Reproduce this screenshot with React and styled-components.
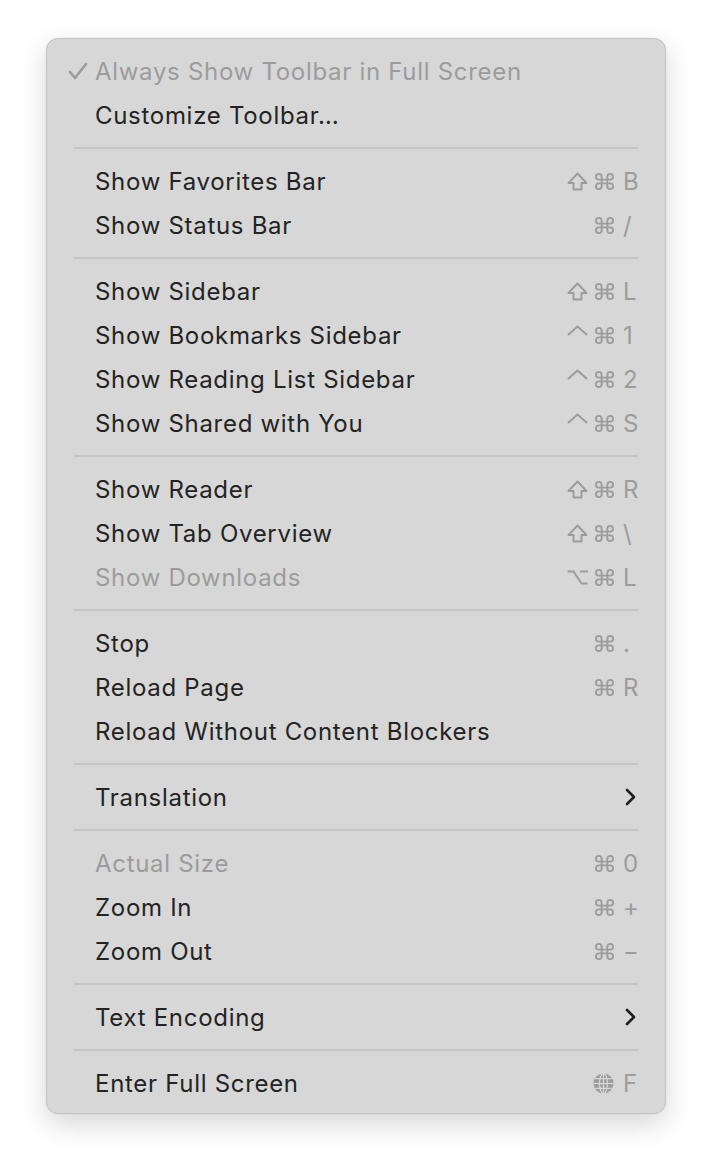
import React from "react";
import styled, { createGlobalStyle } from "styled-components";

const GlobalStyle = createGlobalStyle`
  html, body {
    margin: 0;
    background: #ffffff;
  }
  body {
    font-family: Inter, "Liberation Sans", sans-serif;
    -webkit-font-smoothing: antialiased;
  }
`;

const Page = styled.div`
  padding: 38px 46px;
  width: 712px;
  box-sizing: border-box;
`;

const Panel = styled.div`
  width: 620px;
  box-sizing: border-box;
  background: #d7d7d7;
  border: 1px solid #c3c3c3;
  border-radius: 12px;
  padding: 10px 0 8px;
  box-shadow: 0 10px 28px rgba(0, 0, 0, 0.16), 0 0 2px rgba(0, 0, 0, 0.08);
`;

const Row = styled.div`
  height: 44px;
  display: flex;
  align-items: center;
  position: relative;
  padding: 0 26px 0 48px;
  color: ${(p) => (p.$disabled ? "#9c9c9c" : "#232323")};
  font-size: 24px;
`;

const Check = styled.svg`
  position: absolute;
  left: 20px;
  top: 12px;
  fill: none;
  stroke: #9c9c9c;
  stroke-width: 2.6;
  stroke-linecap: round;
  stroke-linejoin: round;
`;

const Label = styled.span`
  flex: 1;
  letter-spacing: 0.7px;
`;

const Shortcut = styled.div`
  display: flex;
  align-items: center;
  gap: 9px;
  color: #9c9c9c;
`;

const Mods = styled.div`
  display: flex;
  align-items: center;
  gap: 7px;
`;

const Key = styled.span`
  width: 16px;
`;

const Separator = styled.div`
  height: 22px;
  display: flex;
  align-items: center;
  padding: 0 27px;

  &::after {
    content: "";
    flex: 1;
    height: 2px;
    background: #c4c4c4;
  }
`;

const Icon = styled.svg`
  display: block;
  fill: none;
  stroke: currentColor;
  stroke-width: 2;
  stroke-linecap: round;
  stroke-linejoin: round;
`;

const Shift = () => (
  <Icon width="21" height="19" viewBox="0 0 21 19" style={{ strokeWidth: 1.9 }}>
    <path d="M6.5 17.5v-6.5H1.5L10.5 1.5 19.5 11h-5v6.5z" />
  </Icon>
);

const Cmd = () => (
  <Icon width="19" height="19" viewBox="2 2 20 20" style={{ strokeWidth: 2 }}>
    <path d="M15 7v10a3 3 0 1 0 3-3H6a3 3 0 1 0 3 3V7a3 3 0 1 0-3 3h12a3 3 0 1 0-3-3" />
  </Icon>
);

const Ctrl = () => (
  <Icon width="21" height="11" viewBox="0 0 21 11" style={{ marginTop: "-10px" }}>
    <path d="M1.5 9.5L10.5 1.5 19.5 9.5" />
  </Icon>
);

const Opt = () => (
  <Icon width="21" height="15" viewBox="0 0 21 15" style={{ strokeLinecap: "butt", strokeLinejoin: "miter" }}>
    <path d="M0.5 1.5h6l8 12h6" />
    <path d="M13 1.5h8" />
  </Icon>
);

const Globe = () => (
  <svg width="21" height="21" viewBox="0 0 24 24">
    <circle cx="12" cy="12" r="11.5" fill="#9c9c9c" />
    <g fill="none" stroke="#d7d7d7" strokeWidth="1.4">
      <ellipse cx="12" cy="12" rx="4.5" ry="11.5" />
      <line x1="12" y1="0.5" x2="12" y2="23.5" />
      <line x1="0.5" y1="12" x2="23.5" y2="12" />
      <path d="M2.5 6.5h19M2.5 17.5h19" />
    </g>
  </svg>
);

const Chevron = () => (
  <Icon width="16" height="22" viewBox="0 0 16 22" style={{ color: "#1f1f1f", strokeWidth: 2.6 }}>
    <path d="M4 4l7 7-7 7" />
  </Icon>
);

const MOD = { shift: Shift, cmd: Cmd, ctrl: Ctrl, opt: Opt, globe: Globe };

const sections = [
  [
    { label: "Always Show Toolbar in Full Screen", disabled: true, checked: true },
    { label: "Customize Toolbar…" },
  ],
  [
    { label: "Show Favorites Bar", mods: ["shift", "cmd"], key: "B" },
    { label: "Show Status Bar", mods: ["cmd"], key: "/" },
  ],
  [
    { label: "Show Sidebar", mods: ["shift", "cmd"], key: "L" },
    { label: "Show Bookmarks Sidebar", mods: ["ctrl", "cmd"], key: "1" },
    { label: "Show Reading List Sidebar", mods: ["ctrl", "cmd"], key: "2" },
    { label: "Show Shared with You", mods: ["ctrl", "cmd"], key: "S" },
  ],
  [
    { label: "Show Reader", mods: ["shift", "cmd"], key: "R" },
    { label: "Show Tab Overview", mods: ["shift", "cmd"], key: "\\" },
    { label: "Show Downloads", disabled: true, mods: ["opt", "cmd"], key: "L" },
  ],
  [
    { label: "Stop", mods: ["cmd"], key: "." },
    { label: "Reload Page", mods: ["cmd"], key: "R" },
    { label: "Reload Without Content Blockers" },
  ],
  [{ label: "Translation", submenu: true }],
  [
    { label: "Actual Size", disabled: true, mods: ["cmd"], key: "0" },
    { label: "Zoom In", mods: ["cmd"], key: "+" },
    { label: "Zoom Out", mods: ["cmd"], key: "−" },
  ],
  [{ label: "Text Encoding", submenu: true }],
  [{ label: "Enter Full Screen", mods: ["globe"], key: "F" }],
];

const MenuRow = ({ item }) => (
  <Row $disabled={item.disabled}>
    {item.checked && (
      <Check width="22" height="20" viewBox="0 0 22 20">
        <path d="M3 11l5 6L19 3" />
      </Check>
    )}
    <Label>{item.label}</Label>
    {item.mods && (
      <Shortcut>
        <Mods>
          {item.mods.map((m) => {
            const M = MOD[m];
            return <M key={m} />;
          })}
        </Mods>
        <Key>{item.key}</Key>
      </Shortcut>
    )}
    {item.submenu && <Chevron />}
  </Row>
);

const App = () => (
  <>
    <GlobalStyle />
    <Page>
      <Panel>
        {sections.map((section, i) => (
          <React.Fragment key={i}>
            {i > 0 && <Separator />}
            {section.map((item) => (
              <MenuRow key={item.label} item={item} />
            ))}
          </React.Fragment>
        ))}
      </Panel>
    </Page>
  </>
);

export default App;
